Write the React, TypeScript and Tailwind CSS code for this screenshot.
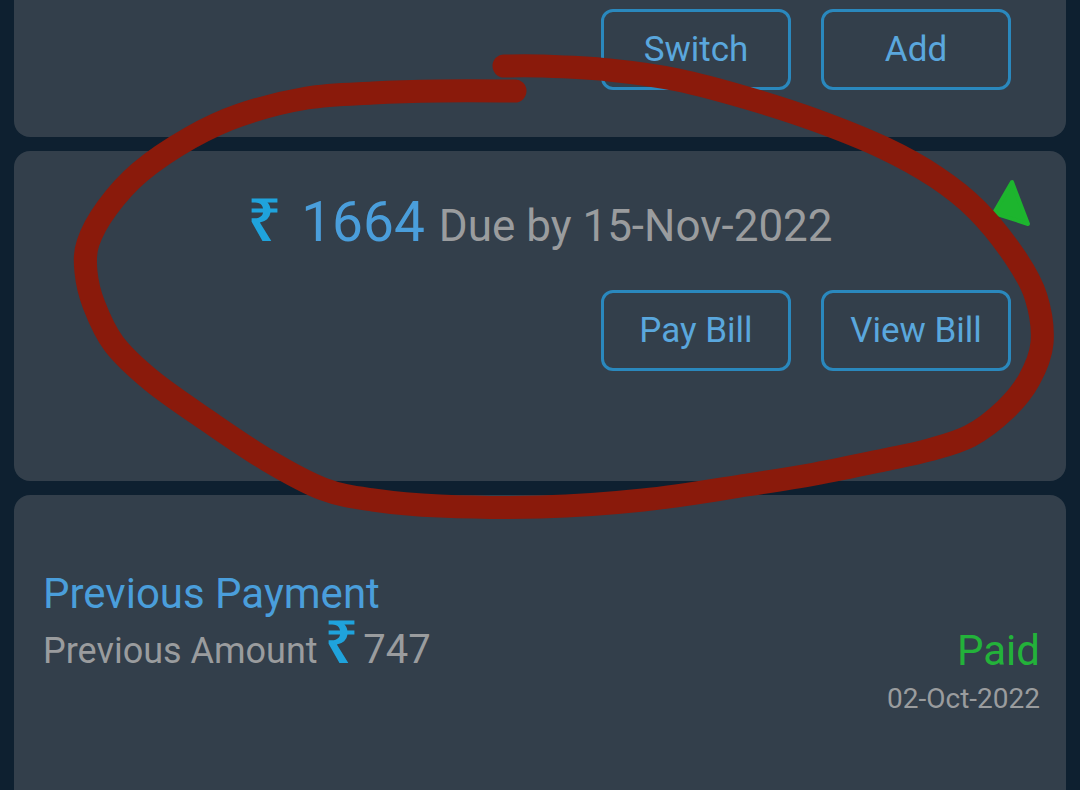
import React from "react";

// hand-drawn marker stroke over the screenshot (traced points)
const markPoints: [number, number][] = [
  [515, 91], [440, 91], [373, 93], [307, 98], [240, 115], [190, 138], [140, 172],
  [107, 208], [88, 243], [86, 272], [94, 305], [114, 344], [152, 381], [208, 421],
  [267, 460], [323, 489], [373, 500], [440, 506], [540, 507], [643, 500], [747, 485],
  [815, 474], [884, 460], [929, 450], [970, 436], [1005, 410], [1029, 380], [1042, 343],
  [1036, 297], [1015, 257], [977, 210], [936, 177], [884, 148], [815, 120], [747, 98],
  [678, 80], [609, 70], [540, 66], [504, 66],
];

const smoothPath = (pts: [number, number][]) => {
  let d = `M${pts[0][0]},${pts[0][1]}`;
  for (let i = 0; i < pts.length - 1; i++) {
    const p0 = pts[i - 1] || pts[i];
    const p1 = pts[i];
    const p2 = pts[i + 1];
    const p3 = pts[i + 2] || p2;
    const c1x = p1[0] + (p2[0] - p0[0]) / 6;
    const c1y = p1[1] + (p2[1] - p0[1]) / 6;
    const c2x = p2[0] - (p3[0] - p1[0]) / 6;
    const c2y = p2[1] - (p3[1] - p1[1]) / 6;
    d += ` C${c1x},${c1y} ${c2x},${c2y} ${p2[0]},${p2[1]}`;
  }
  return d;
};

const markPath = smoothPath(markPoints);

const OutlineButton = ({ label }: { label: string }) => (
  <button className="w-[190px] h-[81px] rounded-[12px] border-[3px] border-[#2a88bd] text-[35px] leading-none text-[#5aa7dd] flex items-center justify-center">
    {label}
  </button>
);

const Rupee = ({ className }: { className: string }) => (
  <span
    className={`text-[59px] leading-[36px] font-semibold text-[#1fa3dc] ${className}`}
    style={{ fontFamily: "'Noto Sans', sans-serif" }}
  >
    ₹
  </span>
);

export default function App() {
  return (
    <div
      className="relative w-[1080px] h-[790px] overflow-hidden bg-[#0e2030] px-[14px] flex flex-col gap-[14px]"
      style={{ fontFamily: "Roboto, 'Noto Sans', sans-serif" }}
    >
      {/* Account card (top cut off) */}
      <div className="h-[137px] shrink-0 bg-[#333f4b] rounded-b-[16px] flex justify-end gap-[30px] pt-[9px] pr-[55px]">
        <OutlineButton label="Switch" />
        <OutlineButton label="Add" />
      </div>

      {/* Current bill */}
      <div className="relative h-[330px] shrink-0 bg-[#333f4b] rounded-[16px] pt-[44px]">
        <div className="flex items-baseline justify-center leading-none">
          <Rupee className="mr-[20px]" />
          <span className="text-[55px] text-[#4a9edb] mr-[14px]">1664</span>
          <span className="text-[44px] text-[#9a9c9e]">Due by 15-Nov-2022</span>
        </div>
        <div className="flex justify-end gap-[30px] pr-[55px] mt-[40px]">
          <OutlineButton label="Pay Bill" />
          <OutlineButton label="View Bill" />
        </div>
        <svg className="absolute left-[976px] top-[27px]" width="44" height="52" viewBox="0 0 44 52">
          <polygon points="22,4 4,35 38,46" fill="#1db52e" stroke="#1db52e" strokeWidth="4" strokeLinejoin="round" />
        </svg>
      </div>

      {/* Previous payment */}
      <div className="h-[310px] shrink-0 bg-[#333f4b] rounded-[16px] flex justify-between pl-[29px] pr-[26px]">
        <div className="pt-[78px]">
          <div className="text-[42px] leading-none text-[#4a9edb]">Previous Payment</div>
          <div className="flex items-baseline leading-none mt-[7px]">
            <span className="text-[36px] text-[#9a9c9e]">Previous Amount</span>
            <Rupee className="ml-[7px]" />
            <span className="text-[40px] text-[#9a9c9e] ml-[5px]">747</span>
          </div>
        </div>
        <div className="pt-[135px] flex flex-col items-end">
          <div className="text-[42px] leading-none text-[#23b23a]">Paid</div>
          <div className="text-[28px] leading-none text-[#9a9c9e] mt-[13px]">02-Oct-2022</div>
        </div>
      </div>

      {/* marker annotation */}
      <svg className="absolute left-0 top-0 pointer-events-none" width="1080" height="790" viewBox="0 0 1080 790">
        <path d={markPath} fill="none" stroke="#8a1a0b" strokeWidth="23" strokeLinecap="round" strokeLinejoin="round" />
      </svg>
    </div>
  );
}
